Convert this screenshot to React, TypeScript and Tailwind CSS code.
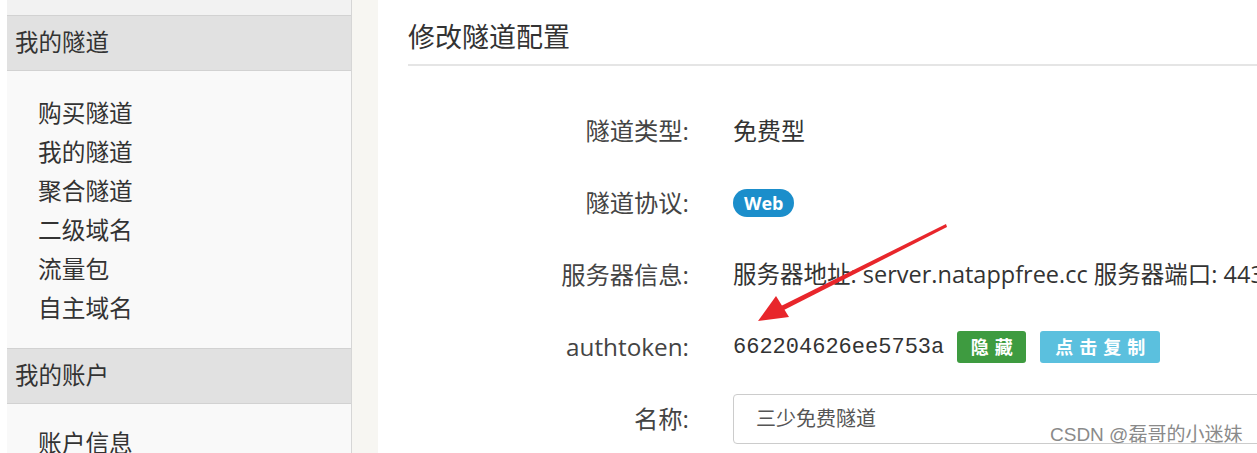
import React from "react";

const cjk = { fontFamily: '"Open Sans", "Noto Sans CJK SC", sans-serif' };

const tunnelLinks = ["购买隧道", "我的隧道", "聚合隧道", "二级域名", "流量包", "自主域名"];

const SideHeader = ({ title }: { title: string }) => (
  <div className="h-[56px] flex items-center px-[8px] bg-[#e1e1e1] border-y border-[#d2d2d2] text-[23.5px] text-[#333]">
    {title}
  </div>
);

const Row = ({ label, children }: { label: string; children: React.ReactNode }) => (
  <div className="h-[72px] flex items-center">
    <div className="w-[281px] shrink-0 text-right text-[24.3px] text-[#444]">{label}</div>
    <div className="ml-[44px] flex items-center whitespace-nowrap">{children}</div>
  </div>
);

export default function App() {
  return (
    <div className="relative w-[1257px] h-[453px] overflow-hidden flex bg-white" style={cjk}>
      <div className="w-[7px] shrink-0 bg-white" />

      <aside className="w-[345px] shrink-0 bg-[#f9f9f9] border-r border-[#d6d6d6]">
        <div className="h-[15px] bg-[#f2f2f2]" />
        <SideHeader title="我的隧道" />
        <ul className="pt-[23px] pb-[20px] pl-[31px] text-[23.7px] text-[#333]">
          {tunnelLinks.map((t) => (
            <li key={t} className="h-[39px] leading-[39px]">
              {t}
            </li>
          ))}
        </ul>
        <SideHeader title="我的账户" />
        <ul className="pt-[20px] pl-[31px] text-[23.7px] text-[#333]">
          <li className="h-[39px] leading-[39px]">账户信息</li>
        </ul>
      </aside>

      <div className="w-[26px] shrink-0 bg-[#f7f6f2]" />

      <main className="flex-1 pl-[30px] min-w-0">
        <div className="pt-[19px] pb-[9px] leading-[36px] text-[27px] text-[#333] border-b-2 border-[#e5e5e5]">
          修改隧道配置
        </div>

        <div className="mt-[29px]">
          <Row label="隧道类型:">
            <span className="text-[24px] text-[#333]">免费型</span>
          </Row>
          <Row label="隧道协议:">
            <span className="h-[28px] px-[11px] rounded-full bg-[#1b8ecb] text-white font-bold text-[18px] leading-[28px]">
              Web
            </span>
          </Row>
          <Row label="服务器信息:">
            <span className="text-[23.5px] text-[#333]">
              服务器地址: server.natappfree.cc 服务器端口: 443
            </span>
          </Row>
          <Row label="authtoken:">
            <span className="text-[22px] text-[#333]" style={{ fontFamily: '"Liberation Mono", monospace' }}>
              662204626ee5753a
            </span>
            <button className="ml-[13px] w-[69px] h-[32px] rounded-[3px] bg-[#3e9b40] text-white text-[18px] font-bold tracking-[6px] pl-[6px]">
              隐藏
            </button>
            <button className="ml-[14px] w-[120px] h-[32px] rounded-[3px] bg-[#5bc0de] text-white text-[18px] font-bold tracking-[6px] pl-[6px]">
              点击复制
            </button>
          </Row>
          <Row label="名称:">
            <div className="w-[600px] h-[50px] flex items-center pl-[22px] border border-[#cccccc] rounded-[4px] text-[20px] text-[#555]">
              三少免费隧道
            </div>
          </Row>
        </div>
      </main>

      <svg className="absolute left-0 top-0 pointer-events-none" width="1257" height="453">
        <polygon points="946,224 947,227 782,311 779,307" fill="#e8262b" />
        <polygon points="758,321 789,317 776,296" fill="#e8262b" />
      </svg>

      <div
        className="absolute left-[1050px] top-[421px] text-[19px] text-[#8a8a8a] whitespace-nowrap"
        style={{ fontFamily: '"Liberation Sans", "Noto Sans CJK SC", sans-serif' }}
      >
        CSDN @磊哥的小迷妹
      </div>
    </div>
  );
}
